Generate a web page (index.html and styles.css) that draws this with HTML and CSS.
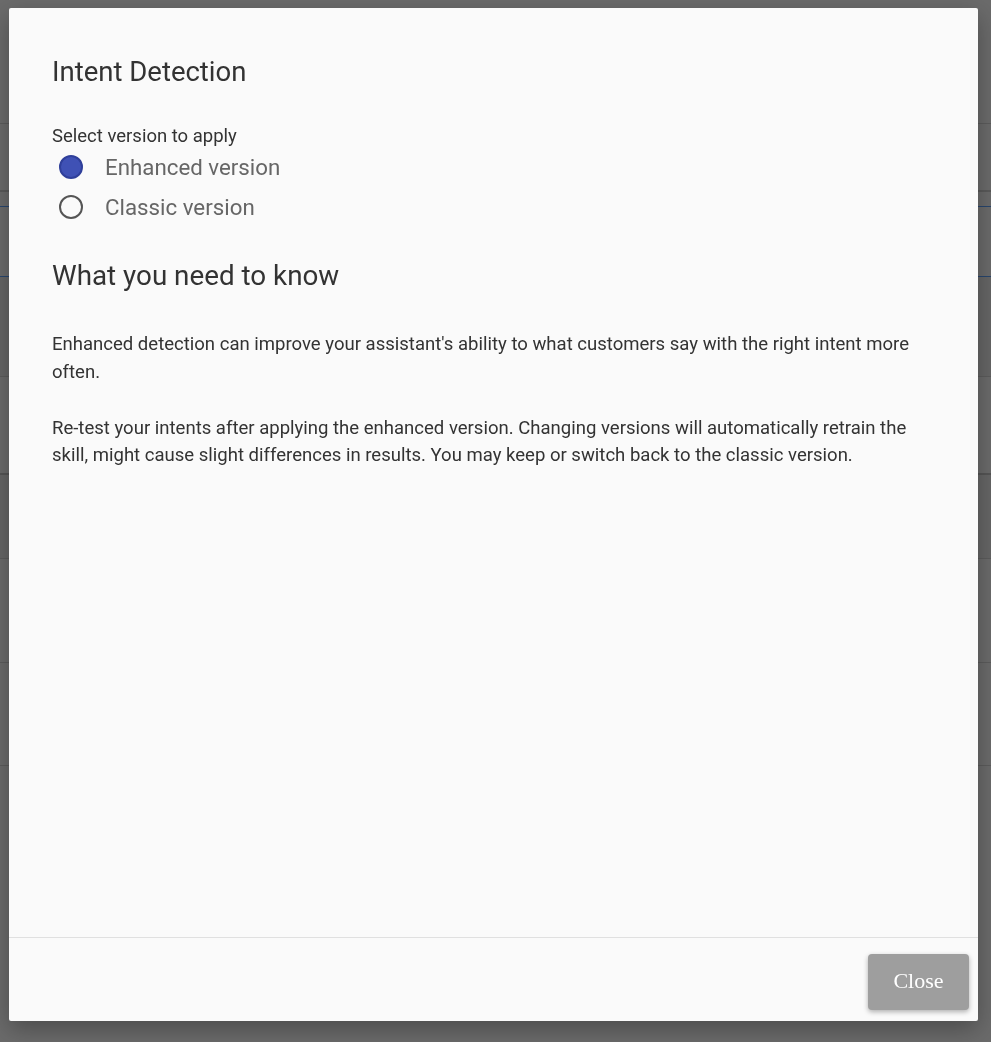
FILE: index.html
```html
<!DOCTYPE html>
<html lang="en">
<head>
<meta charset="utf-8">
<title>Intent Detection</title>
<link rel="stylesheet" href="styles.css">
</head>
<body>
<div class="page">
  <div class="row r1"></div>
  <div class="row r2"></div>
  <div class="row r3 sel"></div>
  <div class="row r4 band"></div>
  <div class="row r5"></div>
  <div class="row r6 band"></div>
  <div class="row r7"></div>
  <div class="row r8"></div>
  <div class="row r9"></div>
</div>

<div class="modal" role="dialog">
  <div class="modal-body">
    <h1 class="title">Intent Detection</h1>
    <div class="field-label">Select version to apply</div>
    <div class="radio-group">
      <label class="radio"><span class="dot checked"></span><span class="radio-text">Enhanced version</span></label>
      <label class="radio"><span class="dot"></span><span class="radio-text">Classic version</span></label>
    </div>
    <h2 class="subtitle">What you need to know</h2>
    <p class="para">Enhanced detection can improve your assistant's ability to what customers say with the right intent more often.</p>
    <p class="para">Re-test your intents after applying the enhanced version. Changing versions will automatically retrain the skill, might cause slight differences in results. You may keep or switch back to the classic version.</p>
  </div>
  <div class="modal-footer">
    <button class="btn-close">Close</button>
  </div>
</div>
</body>
</html>
```
FILE: styles.css
```css
html, body {
  margin: 0;
  padding: 0;
  height: 100%;
}
body {
  background: #6b6b6b;
  font-family: Roboto, "Liberation Sans", Arial, sans-serif;
  overflow: hidden;
}
.page {
  display: flex;
  flex-direction: column;
}
.row {
  border-bottom: 1px solid #5c5c5c;
  box-sizing: border-box;
}
.r1 { height: 124px; }
.r2 { height: 68px; border-bottom: 2px solid #5a5a5a; }
.r3 { height: 71px; border-top: 1px solid #28466e; border-bottom: 1px solid #28466e; margin-top: 14px; }
.r4 { height: 100px; }
.r5 { height: 98px; border-bottom: 2px solid #555; }
.r6 { height: 84px; }
.r7 { height: 104px; }
.r8 { height: 103px; }
.r9 { height: 300px; border-bottom: none; }
.band { background: #666; }

.modal {
  position: fixed;
  left: 9px;
  top: 8px;
  width: 969px;
  height: 1013px;
  background: #fafafa;
  border-radius: 2px;
  box-shadow: 0 8px 24px rgba(0, 0, 0, 0.3);
  display: flex;
  flex-direction: column;
}
.modal-body {
  flex: 1;
  padding: 48px 43px 0 43px;
  color: #333;
}
.title {
  margin: 0;
  font-size: 27.5px;
  font-weight: 400;
  line-height: 32px;
  color: #333;
}
.field-label {
  margin-top: 38px;
  font-size: 18.5px;
  line-height: 20px;
  color: #333;
}
.radio-group {
  display: flex;
  flex-direction: column;
  gap: 14px;
  margin-top: 8px;
}
.radio {
  display: flex;
  align-items: center;
  gap: 22px;
  padding-left: 7px;
  height: 26px;
}
.dot {
  width: 20px;
  height: 20px;
  border-radius: 50%;
  border: 2.5px solid #555;
  box-sizing: content-box;
}
.dot.checked {
  background: #3f51b5;
  border-color: #2f3f9a;
}
.radio-text {
  font-size: 22.3px;
  color: #666;
  line-height: 26px;
}
.subtitle {
  margin: 40px 0 0 0;
  font-size: 27.8px;
  font-weight: 400;
  line-height: 32px;
  color: #333;
}
.para {
  margin: 39px 0 0 0;
  font-size: 18.55px;
  line-height: 27.5px;
  color: #333;
  max-width: 880px;
}
.para + .para {
  margin-top: 28.5px;
}
.modal-footer {
  border-top: 1px solid #e0e0e0;
  height: 84px;
  box-sizing: border-box;
  display: flex;
  justify-content: flex-end;
  align-items: flex-start;
  padding: 16px 9px 0 0;
}
.btn-close {
  width: 101px;
  height: 56px;
  background: #9e9e9e;
  border: none;
  border-radius: 4px;
  color: #fff;
  font-family: "Liberation Serif", "Times New Roman", serif;
  font-size: 22px;
  box-shadow: 0 2px 5px rgba(0, 0, 0, 0.3);
  padding: 0 0 3px 0;
}
```
